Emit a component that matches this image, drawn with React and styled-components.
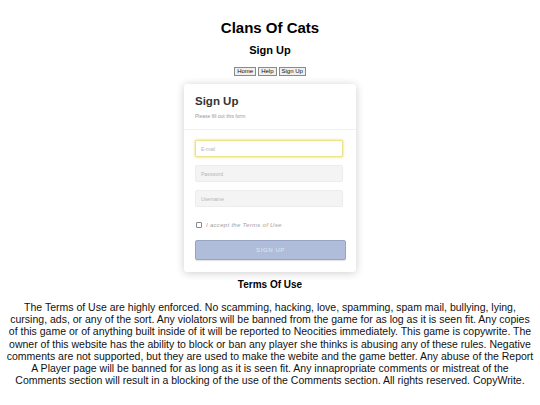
import React from "react";
import styled, { createGlobalStyle } from "styled-components";

const GlobalStyle = createGlobalStyle`
  body {
    margin: 0;
    background: #fff;
    font-family: "Liberation Sans", Arial, sans-serif;
    color: #000;
  }
`;

const Page = styled.div`
  width: 540px;
  display: flex;
  flex-direction: column;
  align-items: center;
  padding-top: 19px;
`;

const SiteTitle = styled.h1`
  margin: 0;
  font-size: 15px;
  line-height: 18px;
  font-weight: bold;
`;

const PageTitle = styled.h2`
  margin: 7px 0 0;
  font-size: 11px;
  line-height: 13px;
  font-weight: bold;
`;

const Nav = styled.nav`
  display: flex;
  gap: 2px;
  margin-top: 10px;
`;

const NavButton = styled.button`
  font-family: "Liberation Sans", Arial, sans-serif;
  font-size: 6px;
  line-height: 7px;
  height: 9px;
  padding: 0 2px;
  color: #111;
  background: #efefef;
  border: 1px solid #8a8a8a;
  border-radius: 0;
`;

const Card = styled.div`
  width: 172px;
  margin-top: 8px;
  background: #fff;
  border-radius: 3px;
  box-shadow: 0 1px 8px rgba(0, 0, 0, 0.2);
`;

const CardHeader = styled.div`
  padding: 11px 11px 9px;
  border-bottom: 1px solid #f0f0f0;
`;

const CardTitle = styled.div`
  font-size: 11.5px;
  line-height: 13px;
  font-weight: 600;
  color: #333;
`;

const CardSubtitle = styled.div`
  margin-top: 5px;
  font-size: 5px;
  line-height: 7px;
  color: #999;
`;

const CardBody = styled.form`
  display: flex;
  flex-direction: column;
  padding: 10px 11px 12px;
`;

const Field = styled.input`
  box-sizing: border-box;
  width: 148px;
  height: 17px;
  margin-bottom: 8px;
  padding: 0 5px;
  font-family: "Liberation Sans", Arial, sans-serif;
  font-size: 5px;
  border-radius: 2px;
  outline: none;
  border: 1px solid ${(p) => (p.$focus ? "#ece28a" : "#ececec")};
  background: ${(p) => (p.$focus ? "#fff" : "#f4f4f4")};
  box-shadow: ${(p) => (p.$focus ? "0 0 2px 1px rgba(238, 228, 140, 0.7)" : "none")};

  &::placeholder {
    color: #b5b5b5;
  }
`;

const Agree = styled.label`
  display: flex;
  align-items: center;
  gap: 4px;
  height: 8px;
  margin-top: 6px;
  padding-left: 1px;
  font-size: 6px;
  font-style: italic;
  letter-spacing: 0.3px;
  color: #a0a0a0;
`;

const Box = styled.span`
  width: 4px;
  height: 4px;
  border: 1px solid #888;
  border-radius: 1px;
`;

const SubmitButton = styled.button`
  margin-top: 11px;
  width: 151px;
  height: 20px;
  font-family: "Liberation Sans", Arial, sans-serif;
  font-size: 6px;
  letter-spacing: 0.6px;
  color: #e3e8f3;
  background: #afbcda;
  border: 1px solid #97a4c4;
  border-radius: 2px;
  box-shadow: 0 1px 1px rgba(0, 0, 0, 0.12);
`;

const TermsHeading = styled.h3`
  margin: 7px 0 0;
  font-size: 10px;
  line-height: 12px;
  font-weight: bold;
`;

const TermsText = styled.p`
  margin: 10px 0 0;
  font-size: 10.5px;
  line-height: 12.2px;
  text-align: center;
  white-space: nowrap;
  color: #111;
`;

const termsLines = [
  "The Terms of Use are highly enforced. No scamming, hacking, love, spamming, spam mail, bullying, lying,",
  "cursing, ads, or any of the sort. Any violators will be banned from the game for as log as it is seen fit. Any copies",
  "of this game or of anything built inside of it will be reported to Neocities immediately. This game is copywrite. The",
  "owner of this website has the ability to block or ban any player she thinks is abusing any of these rules. Negative",
  "comments are not supported, but they are used to make the webite and the game better. Any abuse of the Report",
  "A Player page will be banned for as long as it is seen fit. Any innapropriate comments or mistreat of the",
  "Comments section will result in a blocking of the use of the Comments section. All rights reserved. CopyWrite.",
];

export default function App() {
  return (
    <>
      <GlobalStyle />
      <Page>
        <SiteTitle>Clans Of Cats</SiteTitle>
        <PageTitle>Sign Up</PageTitle>
        <Nav>
          <NavButton>Home</NavButton>
          <NavButton>Help</NavButton>
          <NavButton>Sign Up</NavButton>
        </Nav>
        <Card>
          <CardHeader>
            <CardTitle>Sign Up</CardTitle>
            <CardSubtitle>Please fill out this form</CardSubtitle>
          </CardHeader>
          <CardBody>
            <Field $focus placeholder="E-mail" />
            <Field placeholder="Password" />
            <Field placeholder="Username" />
            <Agree>
              <Box />
              I accept the Terms of Use
            </Agree>
            <SubmitButton type="button">SIGN UP</SubmitButton>
          </CardBody>
        </Card>
        <TermsHeading>Terms Of Use</TermsHeading>
        <TermsText>
          {termsLines.map((line, i) => (
            <React.Fragment key={i}>
              {line}
              {i < termsLines.length - 1 && <br />}
            </React.Fragment>
          ))}
        </TermsText>
      </Page>
    </>
  );
}
